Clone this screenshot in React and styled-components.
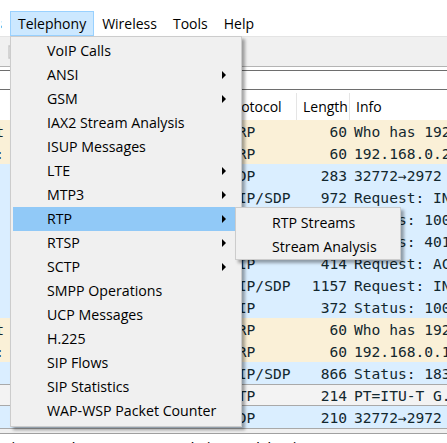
import React from 'react'
import styled, { createGlobalStyle } from 'styled-components'

const GlobalStyle = createGlobalStyle`
    html, body {
        margin: 0;
        padding: 0;
        background: #ffffff;
    }
    body {
        width: 447px;
        height: 443px;
        overflow: hidden;
        font-family: "Open Sans", "Noto Sans", sans-serif;
        color: #000000;
    }
`

const SANS = `"Open Sans", "Noto Sans", sans-serif`
const MONO = `"DejaVu Sans Mono", "Liberation Mono", monospace`

const Window = styled.div`
    position: relative;
    width: 447px;
    height: 443px;
    display: flex;
    flex-direction: column;
    overflow: hidden;
    background: #ffffff;
`

const MenuBar = styled.div`
    height: 36px;
    flex-shrink: 0;
    display: flex;
    align-items: flex-end;
    font-family: ${SANS};
    font-size: 14px;
`

const MenuTitle = styled.div`
    height: 25px;
    box-sizing: border-box;
    display: flex;
    align-items: center;
    flex-shrink: 0;
    padding: 0 7px 1px;
    border: 1px solid ${({ $active }) => ($active ? '#99d1ff' : 'transparent')};
    background: ${({ $active }) => ($active ? '#cce8ff' : 'transparent')};
    white-space: nowrap;
`

const ClippedTitle = styled(MenuTitle)`
    width: 10px;
    overflow: hidden;
    justify-content: flex-end;
    padding-left: 0;
`

const Toolbar = styled.div`
    height: 31px;
    flex-shrink: 0;
    box-sizing: border-box;
    background: #f0f0f0;
    border-top: 1px solid #e4e4e4;
    border-bottom: 1px solid #b4b4b4;
    display: flex;
    align-items: center;
    padding-left: 6px;
`

const FilterBar = styled.div`
    flex-shrink: 0;
    padding-top: 3px;
    background: #ffffff;
`

const FilterInput = styled.div`
    height: 20px;
    box-sizing: border-box;
    border-top: 1px solid #6e6e6e;
    border-bottom: 1px solid #6e6e6e;
`

const COLUMNS = '224px 72px 53px 1fr'

const Header = styled.div`
    height: 30px;
    flex-shrink: 0;
    box-sizing: border-box;
    padding-top: 3px;
    display: grid;
    grid-template-columns: ${COLUMNS};
    font-family: ${SANS};
    font-size: 14px;
`

const HeadCell = styled.div`
    display: flex;
    align-items: center;
    padding-left: ${({ $pad }) => $pad}px;
    border-left: 1px solid ${({ $sep }) => ($sep ? '#e5e5e5' : 'transparent')};
    white-space: nowrap;
    overflow: hidden;
`

const ROW_BG = {
    arp: '#faf0d7',
    udp: '#daeeff',
    plain: '#f3f3f3',
}

const Row = styled.div`
    height: 22px;
    flex-shrink: 0;
    box-sizing: border-box;
    display: grid;
    grid-template-columns: ${COLUMNS};
    align-items: center;
    background: ${({ $kind }) => ROW_BG[$kind]};
    border-top: ${({ $kind }) => ($kind === 'plain' ? '1px solid #a9a9a9' : 'none')};
    border-bottom: ${({ $kind }) => ($kind === 'plain' ? '1px solid #a9a9a9' : 'none')};
    font-family: ${MONO};
    font-size: 14.6px;
    color: #12272e;
    white-space: nowrap;
`

const DestCell = styled.div`
    display: flex;
`

const Tail = styled.span`
    width: 4px;
    overflow: hidden;
    display: flex;
    justify-content: flex-end;
`

const ProtoCell = styled.div`
    padding-left: 5px;
    overflow: hidden;
`

const LengthCell = styled.div`
    text-align: right;
    padding-right: 2px;
`

const InfoCell = styled.div`
    padding-left: 5px;
    overflow: hidden;
`

const Splitter = styled.div`
    height: 6px;
    flex-shrink: 0;
    box-sizing: border-box;
    background: #f0f0f0;
    border-top: 1px solid #a9a9a9;
    border-bottom: 1px solid #a0a0a0;
`

const Details = styled.div`
    flex: 1;
    padding: 5px 0 0 10px;
    font-family: ${MONO};
    font-size: 14.6px;
    color: #000000;
    white-space: nowrap;
`

const Dropdown = styled.div`
    position: absolute;
    left: 10px;
    top: 36px;
    width: 232px;
    height: 391px;
    box-sizing: border-box;
    padding: 2px 6px 2px 2px;
    background: #f0f0f0;
    border: 1px solid #cccccc;
    box-shadow: 3px 3px 3px rgba(0, 0, 0, 0.35);
    font-family: ${SANS};
    font-size: 14.2px;
    z-index: 2;
`

const SubMenu = styled(Dropdown)`
    left: 235px;
    top: 207px;
    width: 166px;
    height: 53px;
    padding: 3px 2px 0 2px;
    z-index: 3;
`

const Item = styled.div`
    height: 24px;
    display: flex;
    align-items: center;
    justify-content: space-between;
    padding: 0 9px 1px 34px;
    box-sizing: border-box;
    background: ${({ $hover }) => ($hover ? '#91c9f7' : 'transparent')};
    white-space: nowrap;
`

const Arrow = styled.span`
    width: 0;
    height: 0;
    border-left: 4px solid #000000;
    border-top: 4px solid transparent;
    border-bottom: 4px solid transparent;
`

const telephony = [
    ['VoIP Calls'],
    ['ANSI', true],
    ['GSM', true],
    ['IAX2 Stream Analysis'],
    ['ISUP Messages'],
    ['LTE', true],
    ['MTP3', true],
    ['RTP', true],
    ['RTSP', true],
    ['SCTP', true],
    ['SMPP Operations'],
    ['UCP Messages'],
    ['H.225'],
    ['SIP Flows'],
    ['SIP Statistics'],
    ['WAP-WSP Packet Counter'],
]

const packets = [
    { kind: 'arp', tail: 't', proto: 'ARP', len: 60, info: 'Who has 192.168.0.1? Tell 192.168.0.2' },
    { kind: 'arp', tail: ':', proto: 'ARP', len: 60, info: '192.168.0.2 is at 00:0c:41:82:b2:53' },
    { kind: 'udp', proto: 'UDP', len: 283, info: '32772→2972 Len=241' },
    { kind: 'udp', proto: 'SIP/SDP', len: 972, info: 'Request: INVITE sip:1000@192.168.0.1' },
    { kind: 'udp', proto: 'SIP', len: 361, info: 'Status: 100 Trying' },
    { kind: 'udp', proto: 'SIP', len: 541, info: 'Status: 401 Unauthorized' },
    { kind: 'udp', proto: 'SIP', len: 414, info: 'Request: ACK sip:1000@192.168.0.1' },
    { kind: 'udp', proto: 'SIP/SDP', len: 1157, info: 'Request: INVITE sip:1000@192.168.0.1' },
    { kind: 'udp', proto: 'SIP', len: 372, info: 'Status: 100 Trying' },
    { kind: 'arp', tail: 't', proto: 'ARP', len: 60, info: 'Who has 192.168.0.2? Tell 192.168.0.1' },
    { kind: 'arp', tail: ':', proto: 'ARP', len: 60, info: '192.168.0.1 is at 00:0c:41:82:b2:55' },
    { kind: 'udp', proto: 'SIP/SDP', len: 866, info: 'Status: 183 Session Progress' },
    { kind: 'plain', proto: 'RTP', len: 214, info: 'PT=ITU-T G.711 PCMU, SSRC=0x2' },
    { kind: 'udp', proto: 'UDP', len: 210, info: '32772→2972 Len=168' },
]

const ToolIcon = () => (
    <svg width="16" height="16" viewBox="0 0 16 16">
        <path d="M3 2 L11 2 L11 14 L3 14 Z M5 5 H9 M5 8 H9" fill="none" stroke="#c8c8c8" strokeWidth="1.4" />
    </svg>
)

const App = () => (
    <Window>
        <GlobalStyle />
        <MenuBar>
            <ClippedTitle>Statistics</ClippedTitle>
            <MenuTitle $active>Telephony</MenuTitle>
            <MenuTitle>Wireless</MenuTitle>
            <MenuTitle>Tools</MenuTitle>
            <MenuTitle>Help</MenuTitle>
        </MenuBar>
        <Toolbar>
            <ToolIcon />
        </Toolbar>
        <FilterBar>
            <FilterInput />
        </FilterBar>
        <Header>
            <HeadCell $pad={60}>Destination</HeadCell>
            <HeadCell $pad={2}>Protocol</HeadCell>
            <HeadCell $pad={6} $sep>Length</HeadCell>
            <HeadCell $pad={6} $sep>Info</HeadCell>
        </Header>
        {packets.map((p, i) => (
            <Row key={i} $kind={p.kind}>
                <DestCell>{p.tail && <Tail>{p.tail}</Tail>}</DestCell>
                <ProtoCell>{p.proto}</ProtoCell>
                <LengthCell>{p.len}</LengthCell>
                <InfoCell>{p.info}</InfoCell>
            </Row>
        ))}
        <Splitter />
        <Details>), 214 bytes captured (1712 bits)</Details>

        <Dropdown>
            {telephony.map(([label, sub]) => (
                <Item key={label} $hover={label === 'RTP'}>
                    <span>{label}</span>
                    {sub && <Arrow />}
                </Item>
            ))}
        </Dropdown>
        <SubMenu>
            <Item>RTP Streams</Item>
            <Item>Stream Analysis</Item>
        </SubMenu>
    </Window>
)

export default App
